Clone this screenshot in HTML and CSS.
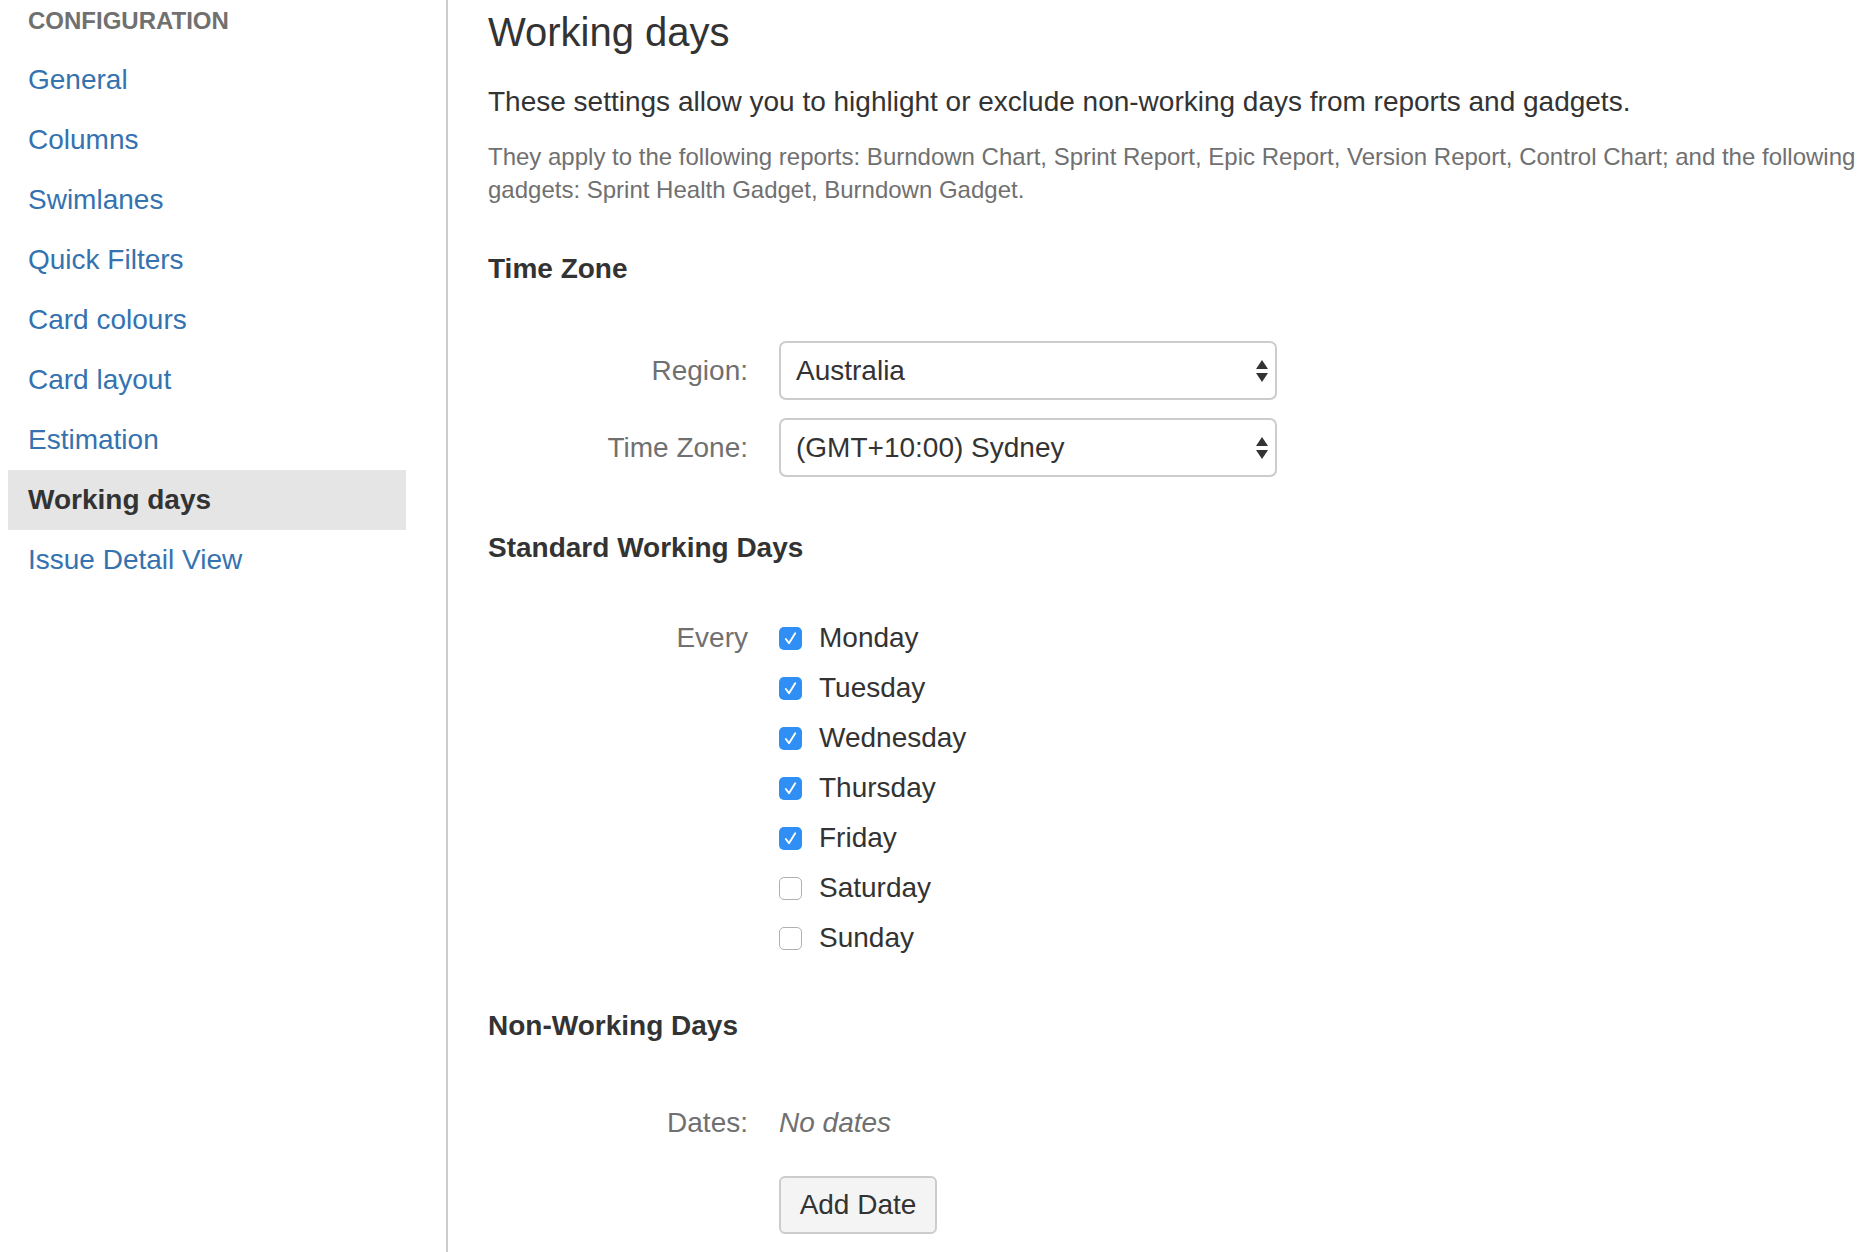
FILE: index.html
```html
<!DOCTYPE html>
<html lang="en">
<head>
<meta charset="utf-8">
<title>Working days</title>
<link rel="stylesheet" href="styles.css">
</head>
<body>
<div class="page">
  <aside class="sidebar">
    <h2 class="sidebar-title">Configuration</h2>
    <ul class="nav">
      <li class="nav-item"><a class="nav-link" href="#">General</a></li>
      <li class="nav-item"><a class="nav-link" href="#">Columns</a></li>
      <li class="nav-item"><a class="nav-link" href="#">Swimlanes</a></li>
      <li class="nav-item"><a class="nav-link" href="#">Quick Filters</a></li>
      <li class="nav-item"><a class="nav-link" href="#">Card colours</a></li>
      <li class="nav-item"><a class="nav-link" href="#">Card layout</a></li>
      <li class="nav-item"><a class="nav-link" href="#">Estimation</a></li>
      <li class="nav-item active"><a class="nav-link" href="#">Working days</a></li>
      <li class="nav-item"><a class="nav-link" href="#">Issue Detail View</a></li>
    </ul>
  </aside>

  <main class="main">
    <h1 class="title">Working days</h1>
    <p class="intro">These settings allow you to highlight or exclude non-working days from reports and gadgets.</p>
    <p class="note">They apply to the following reports: Burndown Chart, Sprint Report, Epic Report, Version Report, Control Chart; and the following gadgets: Sprint Health Gadget, Burndown Gadget.</p>

    <h3 class="section-title">Time Zone</h3>
    <div class="form form-zone">
      <div class="label">Region:</div>
      <div class="select">
        <span>Australia</span>
        <svg class="select-arrows" width="12" height="24" viewBox="0 0 12 24"><polygon points="0,10 6,1 12,10" fill="#333"/><polygon points="0,14 12,14 6,23" fill="#333"/></svg>
      </div>
      <div class="label">Time Zone:</div>
      <div class="select">
        <span>(GMT+10:00) Sydney</span>
        <svg class="select-arrows" width="12" height="24" viewBox="0 0 12 24"><polygon points="0,10 6,1 12,10" fill="#333"/><polygon points="0,14 12,14 6,23" fill="#333"/></svg>
      </div>
    </div>

    <h3 class="section-title section-title-days">Standard Working Days</h3>
    <div class="form form-days">
      <div class="label label-row">Every</div>
      <ul class="days">
        <li class="day"><span class="check on"><svg width="23" height="23" viewBox="0 0 23 23"><path d="M6.8 12 L10 16.2 L16.2 6.2" fill="none" stroke="#fff" stroke-width="1.9" stroke-linecap="round" stroke-linejoin="round"/></svg></span>Monday</li>
        <li class="day"><span class="check on"><svg width="23" height="23" viewBox="0 0 23 23"><path d="M6.8 12 L10 16.2 L16.2 6.2" fill="none" stroke="#fff" stroke-width="1.9" stroke-linecap="round" stroke-linejoin="round"/></svg></span>Tuesday</li>
        <li class="day"><span class="check on"><svg width="23" height="23" viewBox="0 0 23 23"><path d="M6.8 12 L10 16.2 L16.2 6.2" fill="none" stroke="#fff" stroke-width="1.9" stroke-linecap="round" stroke-linejoin="round"/></svg></span>Wednesday</li>
        <li class="day"><span class="check on"><svg width="23" height="23" viewBox="0 0 23 23"><path d="M6.8 12 L10 16.2 L16.2 6.2" fill="none" stroke="#fff" stroke-width="1.9" stroke-linecap="round" stroke-linejoin="round"/></svg></span>Thursday</li>
        <li class="day"><span class="check on"><svg width="23" height="23" viewBox="0 0 23 23"><path d="M6.8 12 L10 16.2 L16.2 6.2" fill="none" stroke="#fff" stroke-width="1.9" stroke-linecap="round" stroke-linejoin="round"/></svg></span>Friday</li>
        <li class="day"><span class="check"></span>Saturday</li>
        <li class="day"><span class="check"></span>Sunday</li>
      </ul>
    </div>

    <h3 class="section-title">Non-Working Days</h3>
    <div class="form form-dates">
      <div class="label">Dates:</div>
      <div class="empty">No dates</div>
      <div></div>
      <div><button class="button" type="button">Add Date</button></div>
    </div>
  </main>
</div>
</body>
</html>
```

FILE: styles.css
```css
html, body {
  margin: 0;
  padding: 0;
  background: #fff;
}

body {
  font-family: "Liberation Sans", Arial, Helvetica, sans-serif;
  color: #333;
}

.page {
  display: flex;
  min-height: 1252px;
}

/* Sidebar */
.sidebar {
  flex: none;
  width: 438px;
  padding: 7px 0 0 8px;
  border-right: 2px solid #ccc;
}

.sidebar-title {
  margin: 0 0 15px;
  padding-left: 20px;
  font-size: 24px;
  line-height: 28px;
  font-weight: bold;
  color: #707070;
  text-transform: uppercase;
}

.nav {
  list-style: none;
  margin: 0;
  padding: 0;
  width: 398px;
}

.nav-link {
  display: block;
  height: 60px;
  line-height: 60px;
  padding-left: 20px;
  font-size: 28px;
  color: #3572b0;
  text-decoration: none;
}

.nav-item.active .nav-link {
  background: #e5e5e5;
  color: #333;
  font-weight: bold;
}

/* Main */
.main {
  flex: 1;
  min-width: 0;
  padding: 8px 0 0 40px;
}

.title {
  margin: 0;
  font-size: 40px;
  line-height: 48px;
  font-weight: normal;
  color: #333;
}

.intro {
  margin: 26px 0 0;
  font-size: 28px;
  line-height: 40px;
}

.note {
  margin: 18px 0 0;
  font-size: 24px;
  line-height: 33px;
  color: #707070;
}

.section-title {
  margin: 43px 0 0;
  font-size: 28px;
  line-height: 40px;
  font-weight: bold;
  color: #333;
}

.section-title-days {
  margin-top: 51px;
}

.form {
  display: grid;
  grid-template-columns: 260px 498px;
  column-gap: 31px;
  align-items: center;
  font-size: 28px;
}

.form-zone {
  margin-top: 52px;
  row-gap: 18px;
}

.form-days {
  margin-top: 45px;
  align-items: start;
}

.form-dates {
  margin-top: 57px;
  row-gap: 33px;
}

.label {
  text-align: right;
  color: #707070;
  line-height: 40px;
}

.label-row {
  line-height: 50px;
}

.select {
  box-sizing: border-box;
  height: 59px;
  display: flex;
  align-items: center;
  justify-content: space-between;
  padding: 0 7px 0 15px;
  border: 2px solid #ccc;
  border-radius: 7px;
  background: #fff;
  color: #333;
}

.select-arrows {
  flex: none;
  display: block;
}

.days {
  list-style: none;
  margin: 0;
  padding: 0;
}

.day {
  display: flex;
  align-items: center;
  height: 50px;
  line-height: 50px;
  color: #333;
}

.check {
  flex: none;
  box-sizing: border-box;
  width: 23px;
  height: 23px;
  margin-right: 17px;
  border: 1.5px solid #b0b0b0;
  border-radius: 5px;
  background: #fff;
  display: flex;
  align-items: center;
  justify-content: center;
}

.check.on {
  border: none;
  background: #2f8ff4;
}

.check svg {
  display: block;
}

.empty {
  font-style: italic;
  color: #707070;
  line-height: 40px;
}

.button {
  box-sizing: border-box;
  width: 158px;
  height: 58px;
  padding: 0;
  border: 2px solid #ccc;
  border-radius: 6px;
  background: #f4f4f4;
  font-family: "Liberation Sans", Arial, Helvetica, sans-serif;
  font-size: 28px;
  color: #333;
}
```
